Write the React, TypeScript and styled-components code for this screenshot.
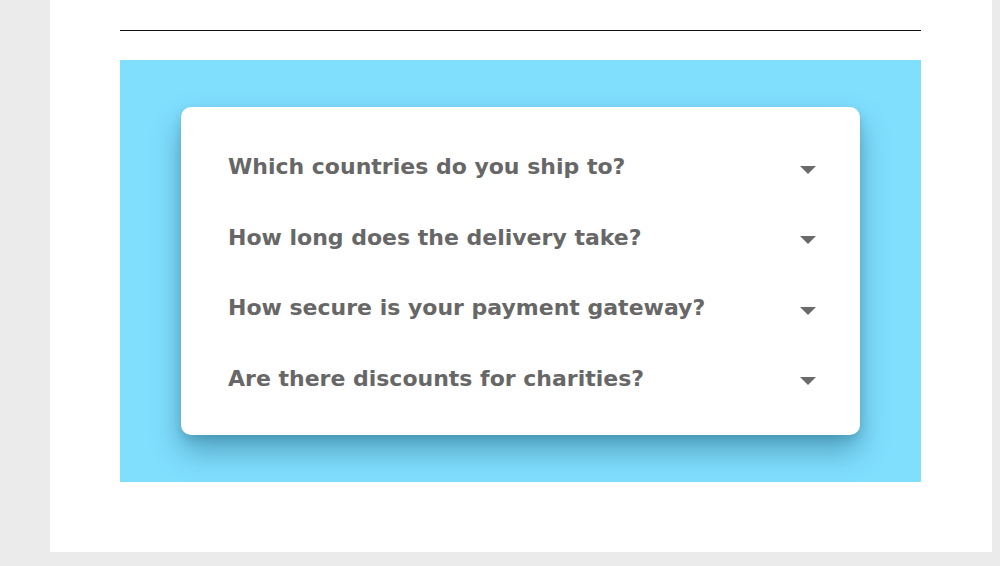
import React from "react";
import styled, { createGlobalStyle } from "styled-components";

const Global = createGlobalStyle`
  html, body { margin: 0; padding: 0; background: #ebebeb; }
  body { font-family: "DejaVu Sans", "Liberation Sans", sans-serif; }
`;

const Page = styled.div`
  width: 1000px;
  height: 566px;
  display: flex;
  align-items: flex-start;
`;

const Panel = styled.main`
  margin-left: 50px;
  width: 942px;
  height: 552px;
  background: #ffffff;
  box-sizing: border-box;
  padding: 30px 71px 0 70px;
  display: flex;
  flex-direction: column;
`;

const Rule = styled.hr`
  margin: 0;
  border: none;
  border-top: 1px solid #111;
  height: 0;
`;

const Stage = styled.section`
  margin-top: 29px;
  height: 422px;
  background: #81dffe;
  padding: 47px 61px 0 61px;
  box-sizing: border-box;
`;

const Card = styled.div`
  height: 328px;
  background: #fff;
  border-radius: 10px;
  box-shadow: 0 16px 30px rgba(0, 60, 90, 0.38), 0 4px 8px rgba(0, 60, 90, 0.15);
  box-sizing: border-box;
  padding: 24px 44px 0 47px;
  display: flex;
  flex-direction: column;
`;

const Row = styled.div`
  height: 70.5px;
  display: flex;
  align-items: center;
  justify-content: space-between;
`;

const Question = styled.span`
  font-size: 22px;
  font-weight: 700;
  color: #676767;
  margin-top: 1px;
`;

const Caret = styled.svg`
  width: 16px;
  height: 8px;
  margin-top: 7px;
  flex: none;
`;

const questions = [
  "Which countries do you ship to?",
  "How long does the delivery take?",
  "How secure is your payment gateway?",
  "Are there discounts for charities?",
];

export default function App() {
  return (
    <>
      <Global />
      <Page>
        <Panel>
          <Rule />
          <Stage>
            <Card>
              {questions.map((q) => (
                <Row key={q}>
                  <Question>{q}</Question>
                  <Caret viewBox="0 0 16 8">
                    <path d="M0 0 H16 L8 8 Z" fill="#6a6a6a" />
                  </Caret>
                </Row>
              ))}
            </Card>
          </Stage>
        </Panel>
      </Page>
    </>
  );
}
